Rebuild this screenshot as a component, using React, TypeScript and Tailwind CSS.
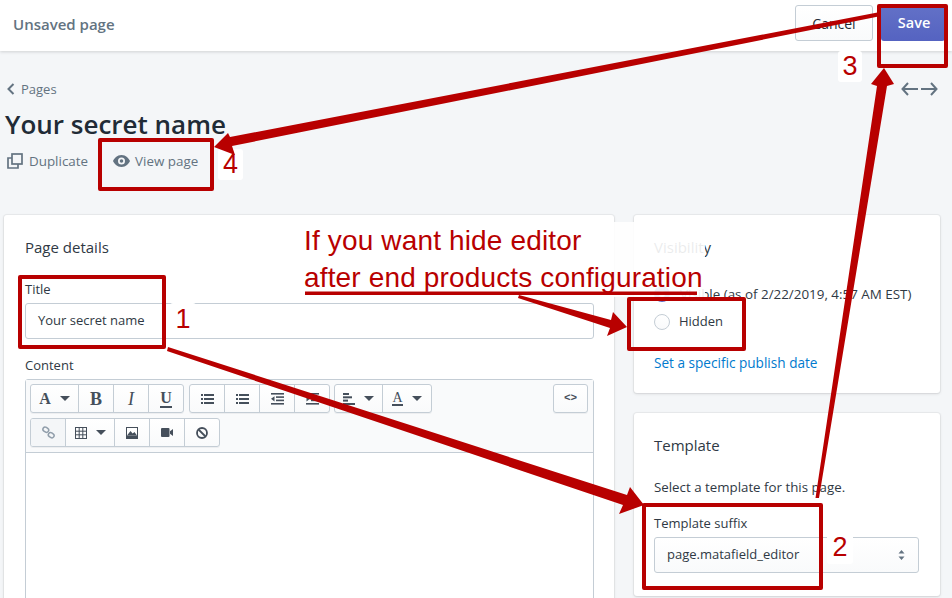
import { ReactNode } from 'react'

const sans = { fontFamily: '"Open Sans", "Noto Sans", sans-serif' }

function Caret() {
    return <span className="ml-[9px] h-0 w-0 border-x-[5px] border-t-[5px] border-x-transparent border-t-[#454f5b]" />
}

function ToolBtn({ w, children, disabled }: { w: string; children: ReactNode; disabled?: boolean }) {
    return (
        <div className={`flex h-full items-center justify-center border-r border-[#c4cdd5] last:border-r-0 ${w} ${disabled ? 'bg-[#f4f6f8]' : ''}`}>
            {children}
        </div>
    )
}

function ToolGroup({ children }: { children: ReactNode }) {
    return (
        <div className="flex h-[29px] overflow-hidden rounded-[3px] border border-[#c4cdd5] bg-gradient-to-b from-white to-[#f9fafb] shadow-[0_1px_0_rgba(22,29,37,.05)]">
            {children}
        </div>
    )
}

function Serif({ children, className }: { children: ReactNode; className?: string }) {
    return <span className={`font-['Liberation_Serif',serif] text-[16px] font-bold leading-none text-[#454f5b] ${className ?? ''}`}>{children}</span>
}

function Lines() {
    return (
        <svg width="13" height="12" viewBox="0 0 13 12" fill="#454f5b">
            <rect x="3" y="1" width="10" height="2" />
            <rect x="3" y="5" width="10" height="2" />
            <rect x="3" y="9" width="10" height="2" />
            <rect x="0" y="1" width="2" height="2" />
            <rect x="0" y="5" width="2" height="2" />
            <rect x="0" y="9" width="2" height="2" />
        </svg>
    )
}

function Editor() {
    return (
        <div className="h-[260px] rounded-t-[3px] border border-[#c4cdd5] bg-white">
            <div className="h-[73px] border-b border-[#c4cdd5] bg-[#f9fafb] pl-[4px] pr-[5px] pt-[4px]">
                <div className="flex justify-between">
                    <div className="flex">
                        <ToolGroup>
                            <ToolBtn w="w-[48px]"><Serif>A</Serif><Caret /></ToolBtn>
                            <ToolBtn w="w-[35px]"><Serif className="text-[18px]">B</Serif></ToolBtn>
                            <ToolBtn w="w-[35px]"><Serif className="font-normal italic text-[18px]">I</Serif></ToolBtn>
                            <ToolBtn w="w-[34px]"><Serif className="border-b-2 border-[#454f5b] text-[14px]">U</Serif></ToolBtn>
                        </ToolGroup>
                        <div className="ml-[5px]">
                            <ToolGroup>
                                <ToolBtn w="w-[35px]"><Lines /></ToolBtn>
                                <ToolBtn w="w-[35px]"><Lines /></ToolBtn>
                                <ToolBtn w="w-[35px]">
                                    <svg width="13" height="12" viewBox="0 0 13 12" fill="#454f5b">
                                        <rect width="13" height="1.6" />
                                        <rect x="5" y="3.3" width="8" height="1.6" />
                                        <rect x="5" y="6.6" width="8" height="1.6" />
                                        <rect y="10" width="13" height="1.6" />
                                        <path d="M0 5.8 3.5 3.2v5.2z" />
                                    </svg>
                                </ToolBtn>
                                <ToolBtn w="w-[34px]">
                                    <svg width="13" height="12" viewBox="0 0 13 12" fill="#454f5b">
                                        <rect width="13" height="1.6" />
                                        <rect x="5" y="3.3" width="8" height="1.6" />
                                        <rect x="5" y="6.6" width="8" height="1.6" />
                                        <rect y="10" width="13" height="1.6" />
                                        <path d="M4 5.8.5 3.2v5.2z" />
                                    </svg>
                                </ToolBtn>
                            </ToolGroup>
                        </div>
                        <div className="ml-[4px]">
                            <ToolGroup>
                                <ToolBtn w="w-[48px]">
                                    <svg width="12" height="12" viewBox="0 0 12 12" fill="#454f5b">
                                        <rect width="6" height="2" />
                                        <rect y="3.3" width="9" height="2" />
                                        <rect y="6.6" width="5" height="2" />
                                        <rect y="10" width="12" height="2" />
                                    </svg>
                                    <Caret />
                                </ToolBtn>
                                <ToolBtn w="w-[48px]">
                                    <span className="border-b-2 border-[#454f5b] font-['Liberation_Serif',serif] text-[14px] leading-[13px] text-[#454f5b]">A</span>
                                    <Caret />
                                </ToolBtn>
                            </ToolGroup>
                        </div>
                    </div>
                    <ToolGroup>
                        <div className="flex w-[33px] items-center justify-center font-['Liberation_Mono',monospace] text-[11px] font-bold text-[#454f5b]">&lt;&gt;</div>
                    </ToolGroup>
                </div>
                <div className="mt-[5px] flex">
                    <ToolGroup>
                        <ToolBtn w="w-[35px]" disabled>
                            <svg width="13" height="13" viewBox="0 0 13 13" fill="none" stroke="#919eab" strokeWidth="1.5">
                                <rect x="0.8" y="1.5" width="6" height="4.4" rx="2.2" transform="rotate(35 3.8 3.7)" />
                                <rect x="6.2" y="7" width="6" height="4.4" rx="2.2" transform="rotate(35 9.2 9.2)" />
                            </svg>
                        </ToolBtn>
                        <ToolBtn w="w-[49px]">
                            <svg width="12" height="12" viewBox="0 0 12 12" fill="none" stroke="#454f5b">
                                <rect x="0.5" y="0.5" width="11" height="11" />
                                <path d="M4.2 0v12M7.8 0v12M0 4.2h12M0 7.8h12" />
                            </svg>
                            <Caret />
                        </ToolBtn>
                        <ToolBtn w="w-[35px]">
                            <svg width="12" height="12" viewBox="0 0 12 12">
                                <rect width="12" height="12" fill="#454f5b" />
                                <rect x="1" y="1" width="10" height="7.5" fill="#fff" />
                                <path d="M1 8.5 4.5 4l2.2 2.5L8.500 5 11 8.5z" fill="#454f5b" />
                            </svg>
                        </ToolBtn>
                        <ToolBtn w="w-[35px]">
                            <svg width="12" height="9" viewBox="0 0 12 9" fill="#454f5b">
                                <rect width="8.5" height="9" rx="1" />
                                <path d="M9 3.2 12 1v7L9 5.8z" />
                            </svg>
                        </ToolBtn>
                        <ToolBtn w="w-[34px]">
                            <svg width="12" height="12" viewBox="0 0 12 12" fill="none" stroke="#454f5b" strokeWidth="1.8">
                                <circle cx="6" cy="6" r="5" />
                                <path d="M2.500 2.500l7 7" />
                            </svg>
                        </ToolBtn>
                    </ToolGroup>
                </div>
            </div>
        </div>
    )
}

function Card({ className, children }: { className?: string; children: ReactNode }) {
    return <div className={`rounded-[3px] bg-white shadow-[0_0_0_1px_rgba(63,63,68,.05),0_1px_3px_0_rgba(63,63,68,.15)] ${className ?? ''}`}>{children}</div>
}

function Annotations() {
    const red = '#b80000'
    return (
        <svg className="pointer-events-none absolute left-0 top-0" width="952" height="598" viewBox="0 0 952 598">
            <g fill="none" stroke={red} strokeWidth="4" strokeLinejoin="round">
                <rect x="100" y="140" width="112" height="49" />
                <rect x="20" y="277" width="144" height="70" />
                <rect x="629" y="299" width="115" height="50" />
                <rect x="644" y="505" width="177" height="83" />
                <rect x="879" y="6" width="67" height="60" />
            </g>
            <path d="M305 291.500H697V295H305Z" fill={red} />
            <g fill={red}>
                <path d="M880 12 881 16 232 146 235 155 214 147 228 133 230 137Z" />
                <path d="M815.500 498 819 498 887 86 894 84 884 68 871 84 877 86Z" />
                <path d="M168 347 167 351 623 505 619 514 644 505 630 487 627 495Z" />
                <path d="M519 295 518 298 610 328 607 336 627 327 613 312 611 320Z" />
            </g>
        </svg>
    )
}

function Badge({ n, className }: { n: number; className: string }) {
    return (
        <div className={`absolute flex items-center justify-center rounded-[3px] bg-white font-['Liberation_Sans',sans-serif] text-[27px] leading-none text-[#b80000] ${className}`}>
            {n}
        </div>
    )
}

export default function App() {
    return (
        <div className="relative h-[598px] w-[952px] overflow-hidden bg-[#f4f6f8] text-[13px] text-[#2f3944]" style={sans}>
            {/* Top bar */}
            <div className="flex h-[51px] items-start justify-between bg-white pl-[13px] pr-[7px] shadow-[0_1px_3px_rgba(63,63,68,.2)]">
                <span className="mt-[14px] text-[15px] font-semibold leading-[20px] text-[#637381]">Unsaved page</span>
                <div className="flex gap-[8px]">
                    <button className="mt-[5px] h-[36px] w-[78px] rounded-[3px] border border-[#c4cdd5] bg-gradient-to-b from-white to-[#f9fafb] text-[14px] text-[#212b36]">Cancel</button>
                    <button className="mt-[5px] h-[36px] w-[64px] rounded-[3px] bg-gradient-to-b from-[#6371c7] to-[#5563c1] pl-[2px] text-[14.500px] font-semibold text-white">Save</button>
                </div>
            </div>

            {/* Page heading */}
            <div className="relative h-[164px]">
                <div className="flex items-center gap-[6px] pl-[7px] pt-[28px] text-[13px] leading-[20px] text-[#637381]">
                    <svg width="8" height="12" viewBox="0 0 8 12" fill="none" stroke="#637381" strokeWidth="2"><path d="M6.500 1 1.500 6l5 5" /></svg>
                    Pages
                </div>
                <h1 className="pl-[5px] pt-[9px] text-[26px] font-semibold leading-[32px] text-[#212b36]">Your secret name</h1>
                <div className="flex items-center pl-[7px] pt-[11px] text-[13.400px] leading-[20px] text-[#637381]">
                    <svg width="16" height="16" viewBox="0 0 16 16" fill="none" stroke="#637381" strokeWidth="1.7">
                        <rect x="5" y="1" width="10" height="10" />
                        <path d="M5 5H1v10h10v-4" />
                    </svg>
                    <span className="ml-[6px]">Duplicate</span>
                    <svg className="ml-[25px]" width="17" height="12" viewBox="0 0 17 12" fill="#637381">
                        <path fillRule="evenodd" d="M8.500 0C4 0 1.200 3.400 0 6c1.200 2.600 4 6 8.500 6S15.800 8.600 17 6C15.800 3.400 13 0 8.500 0zm0 9.500a3.500 3.500 0 1 1 0-7 3.500 3.500 0 0 1 0 7zm0-1.700a1.800 1.800 0 1 0 0-3.600 1.800 1.800 0 0 0 0 3.600z" />
                    </svg>
                    <span className="ml-[5px]">View page</span>
                </div>
                <div className="absolute right-[14px] top-[31px] flex gap-[3px]">
                    <svg width="17" height="14" viewBox="0 0 17 14" fill="none" stroke="#637381" strokeWidth="2"><path d="M7 1 1.500 7 7 13M2 7h15" /></svg>
                    <svg width="17" height="14" viewBox="0 0 17 14" fill="none" stroke="#637381" strokeWidth="2"><path d="M10 1l5.500 6L10 13M15 7H0" /></svg>
                </div>
            </div>

            {/* Columns */}
            <div className="flex items-start gap-[20px] pl-[4px]">
                <Card className="h-[420px] w-[610px] px-[21px] pt-[22px]">
                    <h2 className="text-[15px] font-medium leading-[20px]">Page details</h2>
                    <label className="mt-[22px] block leading-[20px]">Title</label>
                    <div className="mt-[4px] flex h-[36px] w-[569px] items-center rounded-[3px] border border-[#c4cdd5] bg-white pl-[12px]">Your secret name</div>
                    <label className="mt-[16px] block leading-[20px]">Content</label>
                    <div className="mt-[4px] w-[569px]"><Editor /></div>
                </Card>

                <div className="flex w-[306px] flex-col gap-[20px]">
                    <Card className="h-[178px] px-[20px] pt-[22px]">
                        <h2 className="text-[15px] font-medium leading-[20px]">Visibility</h2>
                        <div className="mt-[25px] flex h-[24px] items-center gap-[10px] text-[13.400px]">
                            <span className="flex h-[16px] w-[16px] items-center justify-center rounded-full bg-[#5c6ac4]"><span className="h-[6px] w-[6px] rounded-full bg-white" /></span>
                            Visible (as of 2/22/2019, 4:57 AM EST)
                        </div>
                        <div className="mt-[4px] flex h-[24px] items-center gap-[9px]">
                            <span className="h-[16px] w-[16px] rounded-full border border-[#c4cdd5] bg-gradient-to-b from-white to-[#f9fafb]" />
                            Hidden
                        </div>
                        <div className="mt-[19px] text-[13.600px] leading-[20px] text-[#007ace]">Set a specific publish date</div>
                    </Card>
                    <Card className="h-[183px] px-[20px] pt-[22px]">
                        <h2 className="text-[15px] font-medium leading-[20px]">Template</h2>
                        <p className="mt-[22px] text-[13.300px] leading-[20px]">Select a template for this page.</p>
                        <label className="mt-[16px] block leading-[20px]">Template suffix</label>
                        <div className="mt-[4px] flex h-[36px] w-[265px] items-center justify-between rounded-[3px] border border-[#c4cdd5] bg-gradient-to-b from-white to-[#f9fafb] pl-[12px] pr-[13px]">
                            page.matafield_editor
                            <svg width="7" height="12" viewBox="0 0 7 12" fill="#637381"><path d="M3.500 1 6.500 4.500H.5zM3.500 11 .5 7.500h6z" /></svg>
                        </div>
                    </Card>
                </div>
            </div>

            {/* Screenshot annotations */}
            <div className="absolute left-[301px] top-[222px] h-[75px] w-[404px] bg-white/90" />
            <div className="absolute left-[304px] top-[222px] font-['Liberation_Sans',sans-serif] text-[28px] leading-[37px] tracking-[0.15px] text-[#b80000]">
                <div>If you want hide editor</div>
                <div>after end products configuration</div>
            </div>
            <Badge n={1} className="left-[170px] top-[303px] h-[32px] w-[26px]" />
            <Badge n={2} className="left-[827px] top-[531px] h-[33px] w-[26px]" />
            <Badge n={3} className="left-[838px] top-[51px] h-[31px] w-[24px]" />
            <Badge n={4} className="left-[218px] top-[149px] h-[31px] w-[25px]" />
            <Annotations />
        </div>
    )
}
